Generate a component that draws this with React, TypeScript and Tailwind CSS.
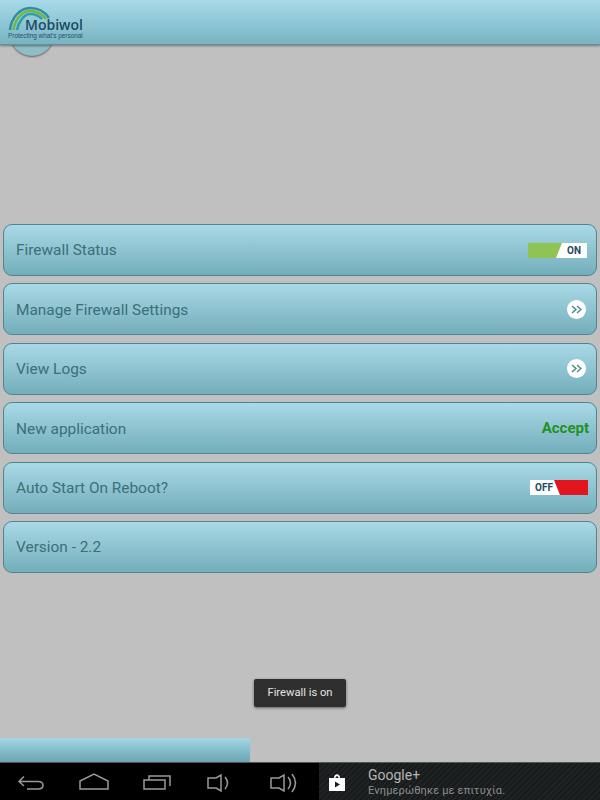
import React from "react";

const font = { fontFamily: "Roboto, sans-serif" };

function Logo() {
  return (
    <div className="absolute left-0 top-0 w-[90px] h-[45px]">
      <svg width="60" height="35" viewBox="0 0 60 35" className="absolute left-0 top-0" fill="none">
        <path d="M10 30C11 18 20 8 30 8C38 8 45 12 49 18" stroke="#2f8f9c" strokeWidth="2.500" />
        <path d="M13.500 30C14.500 20 22 11 30 11C37 11 42 14 46 19" stroke="#76b541" strokeWidth="2.500" />
        <path d="M17 30C18 23 24 14 30 14C36 14 39 16 42 19" stroke="#2f9fae" strokeWidth="2.500" />
      </svg>
      <span className="absolute left-[25px] top-[18px] text-[14px] leading-[14px] font-semibold text-[#1d4a63] font-['Open_Sans',sans-serif]">
        Mobiwol
      </span>
      <span className="absolute left-[8px] top-[32px] text-[6.400px] leading-[7px] whitespace-nowrap text-[#22506a] font-['Liberation_Sans',sans-serif]">
        Protecting what's personal
      </span>
    </div>
  );
}

function Row({ label, children }: { label: string; children?: React.ReactNode }) {
  return (
    <div className="h-[52px] flex items-center justify-between rounded-[9px] border border-[#4f8490] bg-gradient-to-b from-[#a9d9e6] to-[#74aebb] pl-3 pr-[8px]">
      <span className="pt-[2px] text-[15.400px] text-[#3c6f78]">{label}</span>
      {children}
    </div>
  );
}

function Arrow() {
  return (
    <div className="w-[19px] h-[19px] mr-[2px] rounded-full bg-white flex items-center justify-center">
      <svg width="11" height="9" viewBox="0 0 11 9" fill="none" stroke="#4f8793" strokeWidth="1.500">
        <path d="M1 1L5 4.500L1 8M6 1L10 4.500L6 8" />
      </svg>
    </div>
  );
}

function ToggleOn() {
  return (
    <div className="relative w-[59px] h-[15px] mr-[1px] bg-white overflow-hidden">
      <svg width="35" height="15" viewBox="0 0 35 15" className="absolute left-0 top-0">
        <path d="M0 0H34L28 15H0Z" fill="#8fc356" />
      </svg>
      <span className="absolute right-[6px] top-0 text-[10px] leading-[15px] font-bold text-[#1f4a5e]">ON</span>
    </div>
  );
}

function ToggleOff() {
  return (
    <div className="relative w-[58px] h-[15px] bg-white overflow-hidden">
      <svg width="34" height="15" viewBox="0 0 34 15" className="absolute right-0 top-0">
        <path d="M0 0H34V15H6Z" fill="#e2161f" />
      </svg>
      <span className="absolute left-[5px] top-0 text-[10px] leading-[15px] font-bold text-[#1f4a5e]">OFF</span>
    </div>
  );
}

function NavIcons() {
  const s = { stroke: "#9a9a9a", strokeWidth: 1.500, fill: "none" };
  return (
    <div className="w-[319px] h-full bg-black flex items-center">
      <svg width="319" height="37" viewBox="0 0 319 37" {...s}>
        <path d="M24 13.500L19 18.500L24 23M19 18.500H38Q43 18.500 43 22.500Q43 26 38 26H27" />
        <path d="M80 26V18L94 11L108 18V26Z" />
        <path d="M144 17H165V26H144ZM149 17V13H170V23" />
        <path d="M208 15H216L221 12V28L216 25H208ZM225 14Q230 20 225 26" />
        <path d="M271 15H279L284 12V28L279 25H271ZM288 14Q293 20 288 26M292 11Q299 20 292 29" />
      </svg>
    </div>
  );
}

export default function App() {
  return (
    <div className="relative h-[800px] w-[600px] flex flex-col overflow-hidden bg-[#c0c0c0]" style={font}>
      <div className="absolute left-[10px] top-[12px] w-[44px] h-[44px] rounded-full bg-[#8fbcc7] shadow-[0_1px_2px_rgba(0,0,0,0.5)]" />
      <header className="relative h-[45px] shrink-0 bg-gradient-to-b from-[#a8dae8] to-[#78b4c3] border-b border-[#6b8f98] shadow-[0_1px_2px_rgba(0,0,0,0.4)]">
        <Logo />
      </header>

      <main className="flex flex-col gap-[7.400px] px-[3px] mt-[179px]">
        <Row label="Firewall Status"><ToggleOn /></Row>
        <Row label="Manage Firewall Settings"><Arrow /></Row>
        <Row label="View Logs"><Arrow /></Row>
        <Row label="New application">
          <span className="pt-[1px] text-[15px] font-bold text-[#1f9227] -mr-[1px]">Accept</span>
        </Row>
        <Row label="Auto Start On Reboot?"><ToggleOff /></Row>
        <Row label="Version - 2.2" />
      </main>

      <div className="absolute left-[254px] top-[679px] h-[28px] w-[92px] flex items-center justify-center rounded-[2px] bg-[#2f2f2f] text-[11.200px] text-[#e4e4e4] shadow-[0_1px_3px_rgba(0,0,0,0.5)]">
        Firewall is on
      </div>

      <div className="mt-auto h-[24px] w-[250px] shrink-0 bg-gradient-to-b from-[#a3d7e5] to-[#6ca5b3]" />

      <footer className="h-[38px] shrink-0 flex border-t border-[#555]">
        <NavIcons />
        <div className="flex-1 flex items-center bg-[repeating-linear-gradient(135deg,#1f2324_0px,#1f2324_2px,#181b1c_2px,#181b1c_4px)]">
          <svg width="16" height="18" viewBox="0 0 16 18" className="ml-[10px]">
            <path d="M0 5H5C5 0 11 0 11 5H16V18H0ZM6.500 5H9.500C9.500 2.500 6.500 2.500 6.500 5Z" fill="#fff" fillRule="evenodd" />
            <path d="M6 8.500L11 11.500L6 14.500Z" fill="#1c1f20" />
          </svg>
          <div className="ml-[23px] flex flex-col">
            <span className="text-[14px] leading-[17px] text-[#b5b5b5]">Google+</span>
            <span className="text-[11px] leading-[13px] tracking-[0.150px] text-[#8c8c8c]">Ενημερώθηκε με επιτυχία.</span>
          </div>
        </div>
      </footer>
    </div>
  );
}
